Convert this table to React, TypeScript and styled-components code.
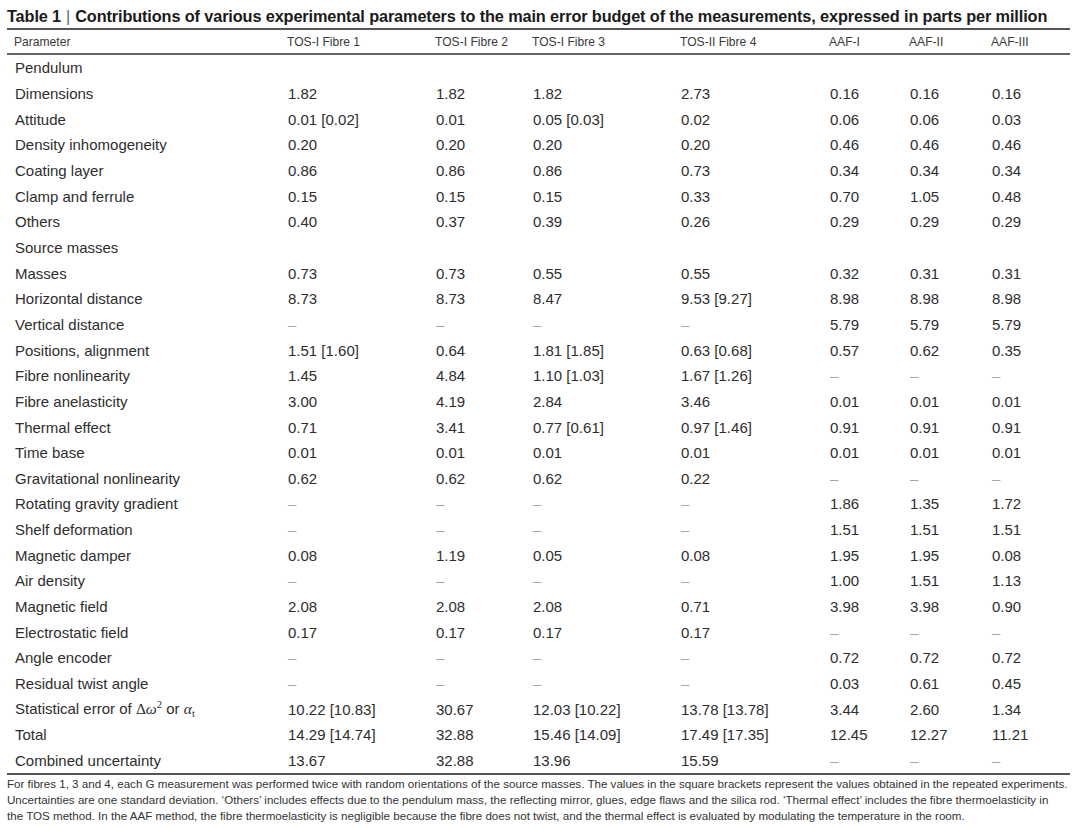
import React from "react";
import styled, { createGlobalStyle } from "styled-components";

const Global = createGlobalStyle`
  html, body { margin: 0; padding: 0; background: #ffffff; }
  body { font-family: "Liberation Sans", Arial, sans-serif; color: #2b2b2b; }
`;

const Page = styled.div`
  width: 1063px;
  padding: 0 10px 0 7px;
`;

const Title = styled.h1`
  margin: 0;
  padding-top: 7px;
  height: 28px;
  box-sizing: border-box;
  font-family: "Liberation Sans", Arial, sans-serif;
  font-weight: 700;
  font-size: 16.3px;
  line-height: 19px;
  letter-spacing: -0.12px;
  color: #1a1a1a;
  white-space: nowrap;
`;

const Sep = styled.span`
  font-weight: 400;
  color: #666;
  padding: 0 5px;
`;

const Table = styled.div`
  border-top: 2px solid #555;
  border-bottom: 2px solid #555;
`;

const COLS = "273px 148px 97px 148px 149px 80px 82px 1fr";

const HeadRow = styled.div`
  display: grid;
  grid-template-columns: ${COLS};
  padding-left: 7px;
  height: 23px;
  align-items: center;
  border-bottom: 2px solid #666;
  font-size: 12.1px;
  color: #3a3a3a;
`;

const Row = styled.div`
  display: grid;
  grid-template-columns: ${COLS};
  padding-left: 8px;
  height: 25.67px;
  align-items: center;
  font-size: 15px;
  color: #2e2e2e;
  white-space: nowrap;
`;

const Cell = styled.div<{ $dash?: boolean }>`
  color: ${(p) => (p.$dash ? "#a8a8a8" : "inherit")};
`;

const Math = styled.span`
  font-family: "Liberation Serif", "Times New Roman", serif;
  font-size: 15.5px;
`;

const Sup = styled.sup`
  font-size: 10.5px;
  vertical-align: 6px;
  line-height: 0;
`;

const Sub = styled.sub`
  font-size: 10.5px;
  vertical-align: -3px;
  line-height: 0;
`;

const Footer = styled.p`
  margin: 0;
  padding-top: 1px;
  font-size: 11.6px;
  line-height: 16px;
  color: #333;
  white-space: nowrap;
`;

const heads = [
  "Parameter",
  "TOS-I Fibre 1",
  "TOS-I Fibre 2",
  "TOS-I Fibre 3",
  "TOS-II Fibre 4",
  "AAF-I",
  "AAF-II",
  "AAF-III",
];

const D = "–";

type RowData = [React.ReactNode, ...string[]];

const rows: RowData[] = [
  ["Pendulum"],
  ["Dimensions", "1.82", "1.82", "1.82", "2.73", "0.16", "0.16", "0.16"],
  ["Attitude", "0.01 [0.02]", "0.01", "0.05 [0.03]", "0.02", "0.06", "0.06", "0.03"],
  ["Density inhomogeneity", "0.20", "0.20", "0.20", "0.20", "0.46", "0.46", "0.46"],
  ["Coating layer", "0.86", "0.86", "0.86", "0.73", "0.34", "0.34", "0.34"],
  ["Clamp and ferrule", "0.15", "0.15", "0.15", "0.33", "0.70", "1.05", "0.48"],
  ["Others", "0.40", "0.37", "0.39", "0.26", "0.29", "0.29", "0.29"],
  ["Source masses"],
  ["Masses", "0.73", "0.73", "0.55", "0.55", "0.32", "0.31", "0.31"],
  ["Horizontal distance", "8.73", "8.73", "8.47", "9.53 [9.27]", "8.98", "8.98", "8.98"],
  ["Vertical distance", D, D, D, D, "5.79", "5.79", "5.79"],
  ["Positions, alignment", "1.51 [1.60]", "0.64", "1.81 [1.85]", "0.63 [0.68]", "0.57", "0.62", "0.35"],
  ["Fibre nonlinearity", "1.45", "4.84", "1.10 [1.03]", "1.67 [1.26]", D, D, D],
  ["Fibre anelasticity", "3.00", "4.19", "2.84", "3.46", "0.01", "0.01", "0.01"],
  ["Thermal effect", "0.71", "3.41", "0.77 [0.61]", "0.97 [1.46]", "0.91", "0.91", "0.91"],
  ["Time base", "0.01", "0.01", "0.01", "0.01", "0.01", "0.01", "0.01"],
  ["Gravitational nonlinearity", "0.62", "0.62", "0.62", "0.22", D, D, D],
  ["Rotating gravity gradient", D, D, D, D, "1.86", "1.35", "1.72"],
  ["Shelf deformation", D, D, D, D, "1.51", "1.51", "1.51"],
  ["Magnetic damper", "0.08", "1.19", "0.05", "0.08", "1.95", "1.95", "0.08"],
  ["Air density", D, D, D, D, "1.00", "1.51", "1.13"],
  ["Magnetic field", "2.08", "2.08", "2.08", "0.71", "3.98", "3.98", "0.90"],
  ["Electrostatic field", "0.17", "0.17", "0.17", "0.17", D, D, D],
  ["Angle encoder", D, D, D, D, "0.72", "0.72", "0.72"],
  ["Residual twist angle", D, D, D, D, "0.03", "0.61", "0.45"],
  [
    <>
      Statistical error of{" "}
      <Math>
        Δ<i>ω</i>
        <Sup>2</Sup>
      </Math>{" "}
      or{" "}
      <Math>
        <i>α</i>
        <Sub>t</Sub>
      </Math>
    </>,
    "10.22 [10.83]",
    "30.67",
    "12.03 [10.22]",
    "13.78 [13.78]",
    "3.44",
    "2.60",
    "1.34",
  ],
  ["Total", "14.29 [14.74]", "32.88", "15.46 [14.09]", "17.49 [17.35]", "12.45", "12.27", "11.21"],
  ["Combined uncertainty", "13.67", "32.88", "13.96", "15.59", D, D, D],
];

export default function App() {
  return (
    <Page>
      <Global />
      <Title>
        Table 1<Sep>|</Sep>Contributions of various experimental parameters to the main error budget of the
        measurements, expressed in parts per million
      </Title>
      <Table>
        <HeadRow>
          {heads.map((h) => (
            <Cell key={h}>{h}</Cell>
          ))}
        </HeadRow>
        {rows.map((r, i) => (
          <Row key={i}>
            {r.map((c, j) => (
              <Cell key={j} $dash={c === D}>
                {c}
              </Cell>
            ))}
          </Row>
        ))}
      </Table>
      <Footer>
        For fibres 1, 3 and 4, each G measurement was performed twice with random orientations of the source
        masses. The values in the square brackets represent the values obtained in the repeated experiments.
        <br />
        Uncertainties are one standard deviation. ‘Others’ includes effects due to the pendulum mass, the reflecting
        mirror, glues, edge flaws and the silica rod. ‘Thermal effect’ includes the fibre thermoelasticity in
        <br />
        the TOS method. In the AAF method, the fibre thermoelasticity is negligible because the fibre does not twist,
        and the thermal effect is evaluated by modulating the temperature in the room.
      </Footer>
    </Page>
  );
}
